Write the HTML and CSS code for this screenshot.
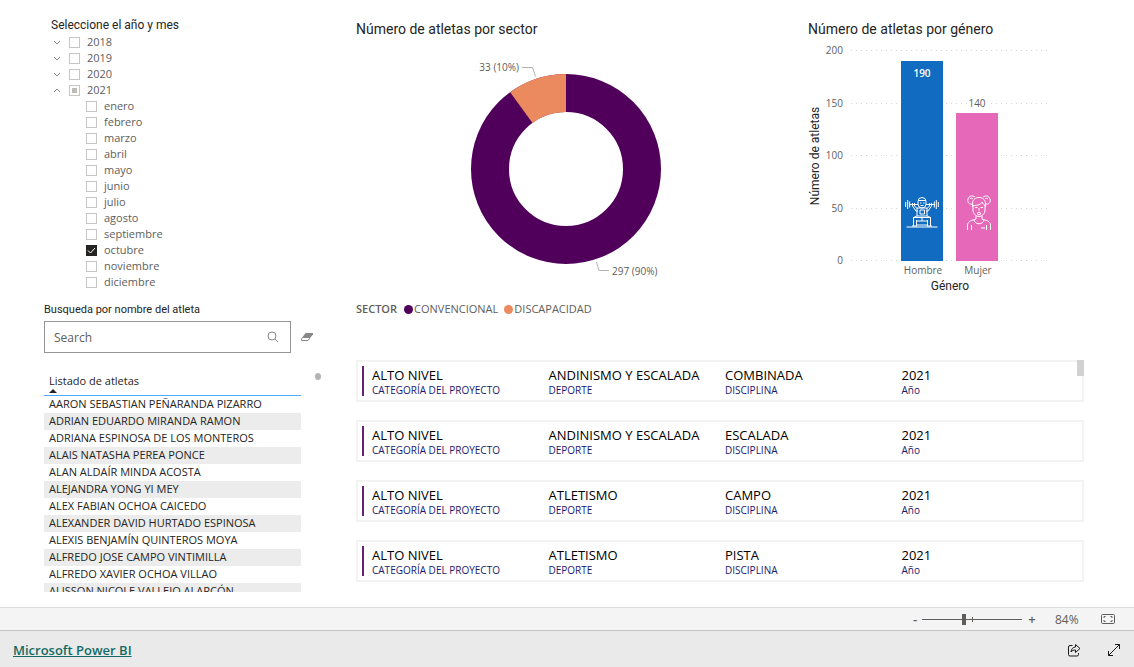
FILE: index.html
```html
<!DOCTYPE html>
<html lang="es">
<head>
<meta charset="utf-8">
<meta name="viewport" content="width=device-width, initial-scale=1">
<title>Número de atletas</title>
<link rel="stylesheet" href="styles.css">
</head>
<body>
<main class="report">
  <aside class="filters">
    <section class="period">
      <h2 class="small-title period-title">Seleccione el año y mes</h2>
      <ul class="tree">
        <li class="node"><button class="toggle" aria-label="Expandir 2018"><svg class="chevron" viewBox="0 0 8 5"><path d="M1 1l3 3 3-3"/></svg></button><label class="option"><input class="box" type="checkbox">2018</label></li>
        <li class="node"><button class="toggle" aria-label="Expandir 2019"><svg class="chevron" viewBox="0 0 8 5"><path d="M1 1l3 3 3-3"/></svg></button><label class="option"><input class="box" type="checkbox">2019</label></li>
        <li class="node"><button class="toggle" aria-label="Expandir 2020"><svg class="chevron" viewBox="0 0 8 5"><path d="M1 1l3 3 3-3"/></svg></button><label class="option"><input class="box" type="checkbox">2020</label></li>
        <li class="node"><button class="toggle" aria-label="Contraer 2021"><svg class="chevron" viewBox="0 0 8 5"><path d="M1 4l3-3 3 3"/></svg></button><label class="option"><input class="box partial" type="checkbox">2021</label></li>
      </ul>
      <ul class="tree months">
        <li class="node"><label class="option"><input class="box" type="checkbox">enero</label></li>
        <li class="node"><label class="option"><input class="box" type="checkbox">febrero</label></li>
        <li class="node"><label class="option"><input class="box" type="checkbox">marzo</label></li>
        <li class="node"><label class="option"><input class="box" type="checkbox">abril</label></li>
        <li class="node"><label class="option"><input class="box" type="checkbox">mayo</label></li>
        <li class="node"><label class="option"><input class="box" type="checkbox">junio</label></li>
        <li class="node"><label class="option"><input class="box" type="checkbox">julio</label></li>
        <li class="node"><label class="option"><input class="box" type="checkbox">agosto</label></li>
        <li class="node"><label class="option"><input class="box" type="checkbox">septiembre</label></li>
        <li class="node"><label class="option"><input class="box" type="checkbox" checked>octubre</label></li>
        <li class="node"><label class="option"><input class="box" type="checkbox">noviembre</label></li>
        <li class="node"><label class="option"><input class="box" type="checkbox">diciembre</label></li>
      </ul>
    </section>

    <section class="search">
      <label class="small-title" for="athlete">Busqueda por nombre del atleta</label>
      <div class="search-row">
        <div class="search-box">
          <input class="search-input" id="athlete" type="text" placeholder="Search">
          <button class="icon-button" aria-label="Buscar"><svg class="icon-search" viewBox="0 0 12 12"><circle cx="5" cy="5" r="4"/><path d="M8 8l3 3"/></svg></button>
        </div>
        <button class="icon-button" aria-label="Borrar"><svg class="icon-eraser" viewBox="0 0 12 10"><path class="eraser-top" d="M4.500 1H12v1.500L9 6H1z"/><path class="eraser-side" d="M1.500 5.500L.5 7v1.500H7L9 6"/></svg></button>
      </div>
    </section>

    <section class="athletes">
      <table class="list">
        <thead><tr><th class="list-head">Listado de atletas<svg class="sort" viewBox="0 0 8 4"><path d="M4 0l4 4H0z"/></svg></th></tr></thead>
        <tbody>
          <tr><td>AARON SEBASTIAN PEÑARANDA PIZARRO</td></tr>
          <tr><td>ADRIAN EDUARDO MIRANDA RAMON</td></tr>
          <tr><td>ADRIANA ESPINOSA DE LOS MONTEROS</td></tr>
          <tr><td>ALAIS NATASHA PEREA PONCE</td></tr>
          <tr><td>ALAN ALDAÍR MINDA ACOSTA</td></tr>
          <tr><td>ALEJANDRA YONG YI MEY</td></tr>
          <tr><td>ALEX FABIAN OCHOA CAICEDO</td></tr>
          <tr><td>ALEXANDER DAVID HURTADO ESPINOSA</td></tr>
          <tr><td>ALEXIS BENJAMÍN QUINTEROS MOYA</td></tr>
          <tr><td>ALFREDO JOSE CAMPO VINTIMILLA</td></tr>
          <tr><td>ALFREDO XAVIER OCHOA VILLAO</td></tr>
          <tr><td>ALISSON NICOLE VALLEJO ALARCÓN</td></tr>
        </tbody>
      </table>
      <span class="list-thumb"></span>
    </section>
  </aside>

  <div class="content">
    <div class="charts">
      <section class="chart">
        <h2 class="chart-title">Número de atletas por sector</h2>
        <svg class="donut" viewBox="0 0 420 256" role="img" aria-label="Convencional 297, Discapacidad 33">
          <circle cx="210" cy="129" r="76" class="ring-conventional"/>
          <path class="slice-disability" d="M210 34A95 95 0 0 0 154.160 52.140L176.500 82.890A57 57 0 0 1 210 72z"/>
          <path class="leader" d="M166 27.500h10.500l3 9"/>
          <path class="leader" d="M240.500 222l2.500 8.500h10"/>
          <text class="tick" x="163" y="31" text-anchor="end">33 (10%)</text>
          <text class="tick" x="256" y="235">297 (90%)</text>
        </svg>
        <div class="legend"><strong>SECTOR</strong><span class="key"><i class="dot dot-conventional"></i>CONVENCIONAL</span><span class="key"><i class="dot dot-disability"></i>DISCAPACIDAD</span></div>
      </section>

      <section class="chart">
        <h2 class="chart-title">Número de atletas por género</h2>
        <svg class="bars" viewBox="0 0 252 256" role="img" aria-label="Hombre 190, Mujer 140">
          <path class="grid" d="M43 10.500h200M43 63.500h200M43 115.500h200M43 168.500h200M43 220.500h200"/>
          <g class="tick" text-anchor="end">
            <text x="35" y="14">200</text><text x="35" y="67">150</text><text x="35" y="119">100</text><text x="35" y="172">50</text><text x="35" y="224">0</text>
          </g>
          <rect class="bar-men" x="93" y="21" width="42" height="200"/>
          <rect class="bar-women" x="148" y="73" width="42" height="148"/>
          <rect class="label-back" x="160" y="58" width="19" height="10"/>
          <text class="bar-value" x="114" y="37" text-anchor="middle">190</text>
          <text class="tick" x="169" y="67" text-anchor="middle">140</text>
          <text class="tick" x="115" y="234" text-anchor="middle">Hombre</text>
          <text class="tick" x="170" y="234" text-anchor="middle">Mujer</text>
          <text class="axis" x="142" y="250" text-anchor="middle">Género</text>
          <text class="axis" transform="translate(11 116) rotate(-90)" text-anchor="middle">Número de atletas</text>
          <g class="figure" transform="translate(97 157)">
            <path d="M13 4.500a4 4 0 0 1 8 0v2.500a4 4 0 0 1-8 0zM13 3.500h8M15 6h1.500M18 6h1.500M15.500 8.500h3"/>
            <path d="M4 7.500h9M21 7.500h9M.7 5v5M33.300 5v5M2.700 3v9M31.300 3v9M4.700 4.500v6M29.300 4.500v6"/>
            <path d="M7.500 6v3l3.500 5h2M26.500 6v3L23 14h-2M9.500 6v3l2.500 2.500M24.500 6v3L22 11.500"/>
            <path d="M12 11h10v8H12zM15 13h4.500v4H15zM12 19l-3.500 1.500V29M22 19l3.500 1.500V29M8 20.500h18M11.500 23v6M22.500 23v6M12 24h10M12 28h10M7 29h5M22 29h5M17 20v4"/>
            <path d="M1.500 30h31"/>
          </g>
          <g class="figure" transform="translate(159 155)">
            <path d="M6 9C2 10 0 7 1 4s4-4 7-2M18 9c4 1 6-2 5-5s-4-4-7-2M3 4c1-1 2-1 3 0M21 4c-1-1-2-1-3 0"/>
            <path d="M5.500 12V8C6 4 9 2.500 12 2.500S18 4 18.500 8v4M6 10.500c5 0 8-1 9-3.500 1 2 2 3 3.500 3.500"/>
            <path d="M6 10v5c0 3.500 3 6.500 6 6.500s6-3 6-6.500v-5M8 12.500h2.500M13.500 12.500H16M12 13v2.500M10 18.500l2-1.500 2 1.500-2 1.500z"/>
            <path d="M9 21v3c-4 1.500-8 1.500-8.500 6v5M15 21v3c4 1.500 8 1.500 8.500 6v5M7 25c1 5 9 5 10 0M4.500 30v5M19.500 30v5M14 33h4"/>
          </g>
        </svg>
      </section>
    </div>

    <div class="cards">
      <article class="card"><dl class="fields">
        <div class="field"><dd>ALTO NIVEL</dd><dt>CATEGORÍA DEL PROYECTO</dt></div>
        <div class="field"><dd>ANDINISMO Y ESCALADA</dd><dt>DEPORTE</dt></div>
        <div class="field"><dd>COMBINADA</dd><dt>DISCIPLINA</dt></div>
        <div class="field"><dd>2021</dd><dt>Año</dt></div>
      </dl></article>
      <article class="card"><dl class="fields">
        <div class="field"><dd>ALTO NIVEL</dd><dt>CATEGORÍA DEL PROYECTO</dt></div>
        <div class="field"><dd>ANDINISMO Y ESCALADA</dd><dt>DEPORTE</dt></div>
        <div class="field"><dd>ESCALADA</dd><dt>DISCIPLINA</dt></div>
        <div class="field"><dd>2021</dd><dt>Año</dt></div>
      </dl></article>
      <article class="card"><dl class="fields">
        <div class="field"><dd>ALTO NIVEL</dd><dt>CATEGORÍA DEL PROYECTO</dt></div>
        <div class="field"><dd>ATLETISMO</dd><dt>DEPORTE</dt></div>
        <div class="field"><dd>CAMPO</dd><dt>DISCIPLINA</dt></div>
        <div class="field"><dd>2021</dd><dt>Año</dt></div>
      </dl></article>
      <article class="card"><dl class="fields">
        <div class="field"><dd>ALTO NIVEL</dd><dt>CATEGORÍA DEL PROYECTO</dt></div>
        <div class="field"><dd>ATLETISMO</dd><dt>DEPORTE</dt></div>
        <div class="field"><dd>PISTA</dd><dt>DISCIPLINA</dt></div>
        <div class="field"><dd>2021</dd><dt>Año</dt></div>
      </dl></article>
      <span class="cards-thumb"></span>
    </div>
  </div>
</main>

<div class="zoom-bar">
  <button class="zoom-button" aria-label="Alejar">-</button>
  <input class="zoom-range" type="range" min="0" max="100" value="42" aria-label="Zoom">
  <button class="zoom-button" aria-label="Acercar">+</button>
  <output class="zoom-value">84%</output>
  <button class="icon-button" aria-label="Ajustar a la página"><svg class="icon-fit" viewBox="0 0 14 10"><rect x=".5" y=".5" width="13" height="9" rx="1"/><path d="M3 4V2.500h1.500M9.500 2.500H11V4M11 6v1.500H9.500M4.500 7.500H3V6"/></svg></button>
</div>

<footer class="footer">
  <a class="brand" href="#">Microsoft Power BI</a>
  <button class="icon-button" aria-label="Compartir"><svg class="icon-footer" viewBox="0 0 14 14"><path d="M5.500 2.500H3a1.500 1.500 0 0 0-1.500 1.500v7.500A1.500 1.500 0 0 0 3 13h7a1.500 1.500 0 0 0 1.500-1.500V10"/><path d="M8.500 1.500l4.500 4-4.500 4V7C6.500 7 5 7.500 4 9c.3-3 2-5 4.500-5z"/></svg></button>
  <button class="icon-button" aria-label="Pantalla completa"><svg class="icon-footer" viewBox="0 0 14 14"><path d="M1.500 12.500l11-11M8 1.500h4.500V6M1.500 8v4.500H6"/></svg></button>
</footer>
</body>
</html>
```

FILE: styles.css
```css
* { box-sizing: border-box; }

body {
  margin: 0;
  height: 100vh;
  display: flex;
  flex-direction: column;
  background: #fff;
  color: #252423;
  font-family: "Open Sans", "Noto Sans", sans-serif;
  font-size: 11px;
}

h2, ul, dl, dd, dt { margin: 0; padding: 0; font-weight: 400; }
ul { list-style: none; }
svg { display: block; fill: none; }
button { margin: 0; padding: 0; border: 0; background: none; color: inherit; font: inherit; }

.report {
  flex: 1;
  min-height: 0;
  display: grid;
  grid-template-columns: 277px 1fr;
  column-gap: 35px;
  padding: 17px 50px 15px 44px;
}

/* Filters */
.filters { display: flex; flex-direction: column; min-height: 0; }
.small-title { display: block; font-family: Roboto, sans-serif; font-size: 11px; line-height: 16px; }
.period { padding-left: 7px; }
.period-title { font-size: 12px; line-height: 17px; }
.node { display: flex; align-items: center; height: 16px; }
.months { padding-left: 35px; }
.toggle { width: 18px; height: 16px; padding-left: 2px; }
.chevron { width: 8px; height: 5px; stroke: #8a8886; }
.option { display: flex; align-items: center; gap: 7px; color: #605e5c; line-height: 18px; }
.box { appearance: none; flex: none; width: 11px; height: 11px; margin: 0; border: 1px solid #c8c6c4; background: #fff; }
.box.partial { background: #bebbb8; box-shadow: inset 0 0 0 2px #fff; }
.box:checked {
  border-color: #252423;
  background: #252423 url("data:image/svg+xml,%3Csvg xmlns='http://www.w3.org/2000/svg' viewBox='0 0 9 9'%3E%3Cpath d='M1 4.500l2.500 2.500L8 2' fill='none' stroke='white'/%3E%3C/svg%3E") center / 9px 9px no-repeat;
}

.search { padding-top: 12px; }
.search-row { display: flex; align-items: center; gap: 10px; margin-top: 3px; }
.search-box { flex: 1; display: flex; align-items: center; height: 32px; max-width: 247px; padding: 0 11px 0 9px; border: 1px solid #979593; }
.search-input { flex: 1; min-width: 0; padding: 0; border: 0; outline: 0; background: none; color: #605e5c; font: inherit; font-size: 12px; }
.search-input::placeholder { color: #605e5c; }
.icon-search { width: 12px; height: 12px; stroke: #8a8886; }
.icon-eraser { width: 12px; height: 10px; }
.eraser-top { fill: #8a8886; }
.eraser-side { stroke: #8a8886; }

.athletes { position: relative; flex: 1; min-height: 0; margin-top: 20px; overflow: hidden; }
.list { width: 257px; border-collapse: collapse; }
.list-head { padding: 0 5px; border-bottom: 1px solid #4fa9ff; font-weight: 400; font-size: 11px; line-height: 16px; text-align: left; }
.sort { width: 8px; height: 4px; margin-bottom: 2px; fill: #252423; }
.list td { height: 17px; padding: 0 5px; font-size: 11px; line-height: 16px; white-space: nowrap; vertical-align: top; }
.list tbody tr:nth-child(even) { background: #ececec; }
.list-thumb { position: absolute; top: 0; right: 0; width: 6px; height: 7px; border-radius: 50%; background: #b3b3b3; }

/* Charts */
.content { display: flex; flex-direction: column; min-width: 0; }
.charts { display: grid; grid-template-columns: 452fr 276fr; }
.chart-title { padding-top: 2px; font-family: Roboto, sans-serif; font-size: 14px; line-height: 21px; }
.donut { width: 420px; height: 256px; }
.bars { width: 252px; height: 256px; }
.ring-conventional { stroke: #50005b; stroke-width: 38; }
.slice-disability { fill: #eb895f; }
.leader { stroke: #b3b0ad; }
.tick { fill: #605e5c; font-size: 10px; }
.axis { fill: #252423; font-family: Roboto, sans-serif; font-size: 12px; }
.grid { stroke: #d8d6d4; stroke-dasharray: 1 4; }
.bar-men { fill: #116bc0; }
.bar-women { fill: #e668b9; }
.label-back { fill: #fff; }
.bar-value { fill: #fff; font-size: 10px; font-weight: 600; }
.figure { stroke: #fff; stroke-linejoin: round; }
.legend { display: flex; align-items: center; gap: 6px; padding-top: 5px; color: #605e5c; font-size: 11px; line-height: 16px; }
.legend strong { padding-right: 1px; font-weight: 600; }
.key { display: flex; align-items: center; gap: 1px; }
.dot { width: 9px; height: 9px; border-radius: 50%; }
.dot-conventional { background: #50005b; }
.dot-disability { background: #eb895f; }

/* Cards */
.cards { position: relative; display: flex; flex-direction: column; gap: 18px; margin-top: 43px; }
.card { padding: 4px; border: 2px solid #f3f3f3; }
.fields { display: grid; grid-template-columns: repeat(4, 1fr); padding-left: 8px; border-left: 2px solid #652274; }
.field { display: flex; flex-direction: column; }
.field dd { color: #000; font-size: 13px; line-height: 18px; white-space: nowrap; }
.field dt { color: #191970; font-size: 10px; line-height: 12px; white-space: nowrap; }
.cards-thumb { position: absolute; top: 0; right: 0; width: 7px; height: 16px; background: #d2d2d2; }

/* Bottom bars */
.zoom-bar { display: flex; align-items: center; justify-content: flex-end; height: 23px; padding-right: 19px; border-top: 1px solid #dcdcdc; background: #f4f4f4; color: #605e5c; }
.zoom-button { width: 20px; font-size: 13px; font-weight: 600; line-height: 20px; }
.zoom-button:first-child { width: 13px; text-align: left; }
.zoom-range {
  appearance: none;
  width: 100px;
  height: 12px;
  margin: 0 0 0 -4px;
  background:
    linear-gradient(#605e5c, #605e5c) 50px 4px / 1px 5px no-repeat,
    linear-gradient(#605e5c, #605e5c) 0 6px / 100% 1px no-repeat;
}
.zoom-range::-webkit-slider-thumb { appearance: none; width: 4px; height: 11px; background: #605e5c; }
.zoom-value { width: 46px; margin-left: 13px; font-size: 12px; }
.icon-fit { width: 14px; height: 10px; stroke: #605e5c; }
.footer { display: flex; align-items: center; gap: 26px; height: 37px; padding: 2px 13px 0; border-top: 1px solid #c6c6c6; background: #eaeaea; }
.brand { margin-right: auto; color: #136a64; font-size: 13px; font-weight: 600; line-height: 18px; }
.icon-footer { width: 14px; height: 14px; stroke: #1b1a19; }
```
